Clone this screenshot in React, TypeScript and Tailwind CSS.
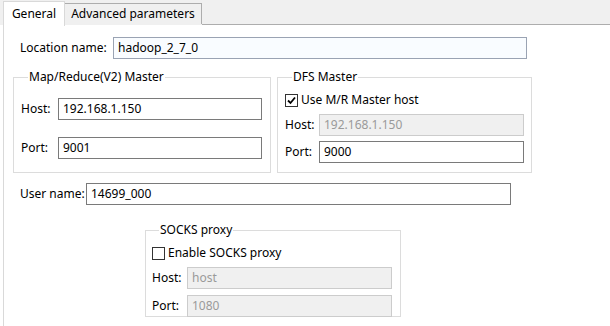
const font = { fontFamily: '"Noto Sans", "Liberation Sans", sans-serif' };

function Field({
  value,
  width,
  disabled,
  focus,
}: {
  value: string;
  width: string;
  disabled?: boolean;
  focus?: boolean;
}) {
  const base = 'h-[22px] flex items-center px-[4px] border text-[12px] leading-none';
  const look = disabled
    ? 'bg-[#f0f0f0] border-[#cccccc] text-[#9a9a9a]'
    : focus
      ? 'bg-[#f9fcff] border-[#9aa3b3] text-black'
      : 'bg-white border-[#7a7a7a] text-black';
  return <div className={`${base} ${look} ${width}`}>{value}</div>;
}

function Check({ checked }: { checked?: boolean }) {
  return (
    <div className="w-[13px] h-[13px] border border-[#333333] bg-white flex items-center justify-center">
      {checked && (
        <svg width="9" height="9" viewBox="0 0 9 9">
          <path d="M1 4.5 L3.5 7 L8 1.5" fill="none" stroke="#000" strokeWidth="1.8" />
        </svg>
      )}
    </div>
  );
}

function Group({ title, className, children }: { title: string; className: string; children: React.ReactNode }) {
  return (
    <fieldset className={`border border-[#dcdcdc] ${className}`}>
      <legend className="ml-[7px] px-[1px] text-[12px] leading-[16px] text-black">{title}</legend>
      {children}
    </fieldset>
  );
}

export default function App() {
  return (
    <div className="w-[610px] h-[326px] bg-white overflow-hidden text-[12px] text-black" style={font}>
      <div className="flex h-[25px] bg-[#f0f0f0] pl-[3px]">
        <div className="w-[62px] h-[25px] mt-[1px] bg-white border-l border-t border-r border-[#d9d9d9] flex items-center justify-center">
          General
        </div>
        <div className="w-[137px] h-[21px] mt-[3px] border border-b-0 border-l-0 border-[#adadad] bg-[#f0f0f0] flex items-center justify-center">
          Advanced parameters
        </div>
        <div className="flex-1 border-b border-[#adadad]" />
      </div>

      <div className="ml-[3px] border-l border-[#d9d9d9] h-[301px] pl-[16px] pt-[12px]">
        <div className="flex items-center h-[22px]">
          <span className="w-[93px]">Location name:</span>
          <Field value="hadoop_2_7_0" width="w-[414px]" focus />
        </div>

        <div className="flex mt-[10px] h-[104px] ml-[-7px] gap-[6px]">
          <Group title="Map/Reduce(V2) Master" className="w-[258px] h-[104px] pl-[7px]">
            <div className="flex items-center mt-[13px]">
              <span className="w-[37px]">Host:</span>
              <Field value="192.168.1.150" width="w-[204px]" />
            </div>
            <div className="flex items-center mt-[17px]">
              <span className="w-[37px]">Port:</span>
              <Field value="9001" width="w-[204px]" />
            </div>
          </Group>
          <Group title="DFS Master" className="w-[255px] h-[104px] pl-[7px]">
            <div className="flex items-center gap-[3px] mt-[8px] h-[14px]">
              <Check checked />
              <span>Use M/R Master host</span>
            </div>
            <div className="flex items-center mt-[7px]">
              <span className="w-[34px]">Host:</span>
              <Field value="192.168.1.150" width="w-[205px]" disabled />
            </div>
            <div className="flex items-center mt-[5px]">
              <span className="w-[34px]">Port:</span>
              <Field value="9000" width="w-[205px]" />
            </div>
          </Group>
        </div>

        <div className="flex items-center h-[22px] mt-[10px]">
          <span className="w-[66px]">User name:</span>
          <Field value="14699_000" width="w-[425px]" />
        </div>

        <div className="mt-[17px] ml-[125px]">
          <Group title="SOCKS proxy" className="w-[256px] h-[95px] pl-[6px]">
            <div className="flex items-center gap-[3px] mt-[8px] h-[14px]">
              <Check />
              <span>Enable SOCKS proxy</span>
            </div>
            <div className="flex items-center mt-[7px]">
              <span className="w-[35px]">Host:</span>
              <Field value="host" width="w-[205px]" disabled />
            </div>
            <div className="flex items-center mt-[6px]">
              <span className="w-[35px]">Port:</span>
              <Field value="1080" width="w-[205px]" disabled />
            </div>
          </Group>
        </div>
      </div>
    </div>
  );
}
